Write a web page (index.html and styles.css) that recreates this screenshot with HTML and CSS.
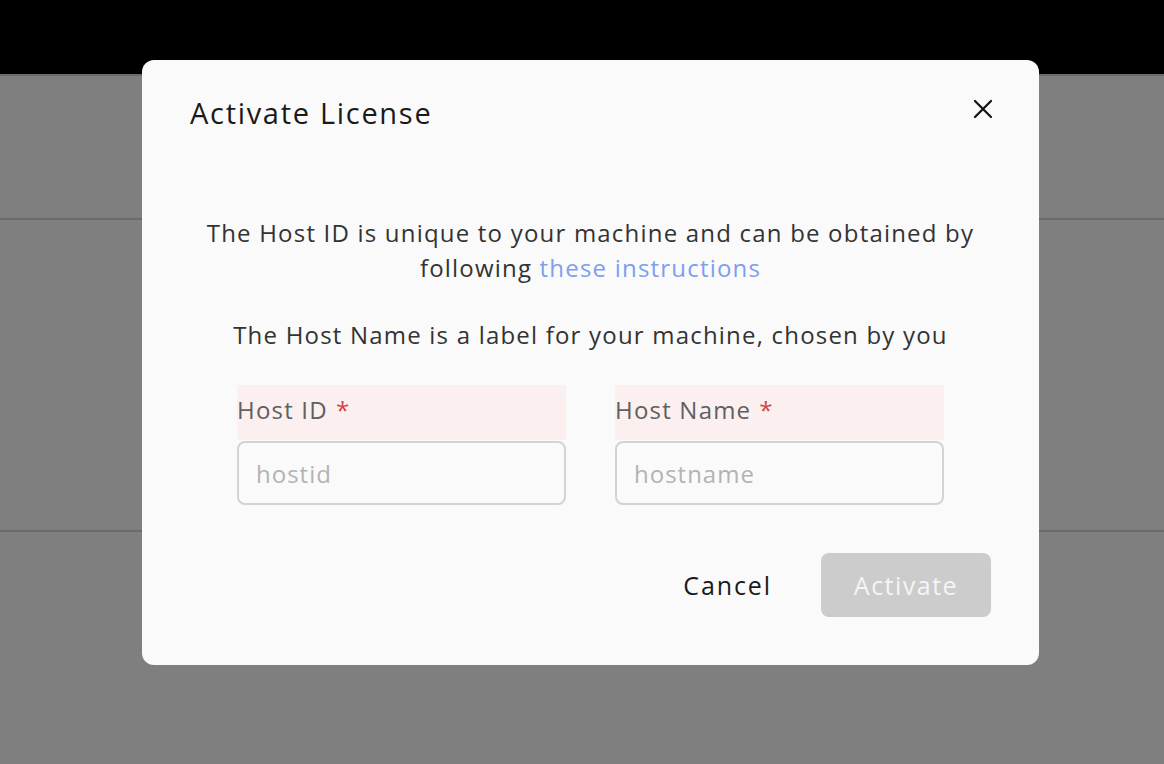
FILE: index.html
```html
<!DOCTYPE html>
<html>
<head>
<meta charset="utf-8">
<link rel="stylesheet" href="styles.css">
</head>
<body>
<div class="app">
  <header class="topbar"></header>
  <section class="band band-1"></section>
  <section class="band band-2"></section>
  <section class="band band-3"></section>
</div>
<div class="overlay">
  <div class="modal">
    <div class="modal-head">
      <h2 class="modal-title">Activate License</h2>
      <button class="close" aria-label="Close">
        <svg width="20" height="20" viewBox="0 0 20 20"><path d="M2 2 L18 18 M18 2 L2 18" stroke="#111" stroke-width="2.2" stroke-linecap="round"/></svg>
      </button>
    </div>
    <div class="modal-body">
      <p class="info">The Host ID is unique to your machine and can be obtained by following <a class="link" href="#">these instructions</a></p>
      <p class="info">The Host Name is a label for your machine, chosen by you</p>
      <div class="fields">
        <div class="field">
          <label class="label">Host ID <span class="req">*</span></label>
          <input class="input" placeholder="hostid">
        </div>
        <div class="field">
          <label class="label">Host Name <span class="req">*</span></label>
          <input class="input" placeholder="hostname">
        </div>
      </div>
    </div>
    <div class="modal-foot">
      <button class="btn-cancel">Cancel</button>
      <button class="btn-activate" disabled>Activate</button>
    </div>
  </div>
</div>
</body>
</html>
```

FILE: styles.css
```css
* { box-sizing: border-box; }
html, body { margin: 0; padding: 0; }
body {
  width: 1164px;
  height: 764px;
  overflow: hidden;
  font-family: "Open Sans", "Noto Sans", sans-serif;
  letter-spacing: 1.2px;
  background: #fff;
  position: relative;
}
.app { display: flex; flex-direction: column; }
.topbar { height: 76px; background: #000; border-bottom: 2px solid #d6d6d6; }
.band { border-bottom: 2px solid #d6d6d6; }
.band-1 { height: 144px; }
.band-2 { height: 312px; }
.band-3 { height: 232px; border-bottom: none; }

.overlay {
  position: absolute;
  inset: 0;
  background: rgba(0, 0, 0, 0.5);
}
.modal {
  position: absolute;
  left: 142px;
  top: 60px;
  width: 897px;
  background: #fafafa;
  border-radius: 12px;
  padding: 29px 48px 48px;
  color: #333;
}
.modal-head {
  display: flex;
  justify-content: space-between;
  align-items: flex-start;
}
.modal-title {
  margin: 0;
  font-size: 29px;
  font-weight: 400;
  letter-spacing: 1.7px;
  line-height: 48px;
  color: #1a1a1a;
}
.close {
  border: none;
  background: none;
  padding: 0;
  margin-top: 10px;
  margin-right: -2px;
  width: 20px;
  height: 20px;
  display: flex;
}
.modal-body {
  padding-top: 78px;
  display: flex;
  flex-direction: column;
  align-items: center;
}
.info {
  margin: 0 0 32px;
  text-align: center;
  font-size: 24px;
  line-height: 35px;
  color: #333;
  max-width: 790px;
}
.link { color: #7d9ff0; text-decoration: none; }
.fields {
  display: flex;
  gap: 49px;
  margin-top: 1px;
}
.field { width: 329px; display: flex; flex-direction: column; gap: 1px; }
.label {
  background: #fbeff0;
  height: 55px;
  padding-bottom: 6px;
  font-size: 24px;
  color: #606060;
  display: flex;
  align-items: center;
  gap: 8px;
}
.req { color: #d04545; }
.input {
  height: 64px;
  border: 2px solid #d3d3d3;
  border-radius: 8px;
  background: #fafafa;
  padding: 0 17px;
  font-family: inherit;
  letter-spacing: 1px;
  font-size: 24px;
  color: #333;
  outline: none;
}
.input::placeholder { color: #b3b3b3; }
.modal-foot {
  display: flex;
  justify-content: flex-end;
  align-items: center;
  gap: 49px;
  margin-top: 48px;
}
.btn-cancel {
  border: none;
  background: none;
  font-family: inherit;
  letter-spacing: 1.9px;
  font-size: 25px;
  color: #1a1a1a;
  padding: 0;
}
.btn-activate {
  width: 170px;
  height: 64px;
  border: none;
  border-radius: 8px;
  background: #cccccc;
  color: #f5f5f5;
  font-family: inherit;
  letter-spacing: 1.5px;
  font-size: 25px;
}
```
